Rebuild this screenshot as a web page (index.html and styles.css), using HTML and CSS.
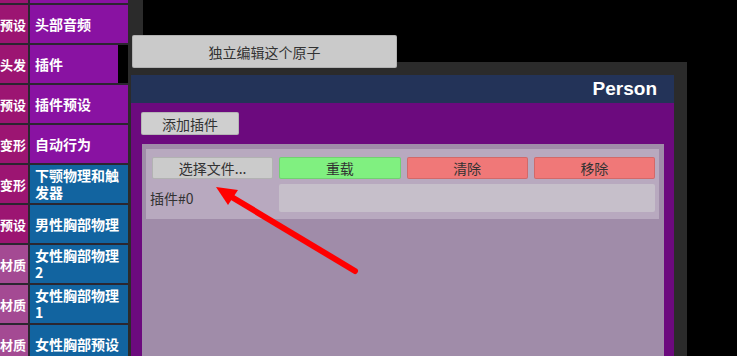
FILE: index.html
```html
<!DOCTYPE html>
<html lang="zh">
<head>
<meta charset="utf-8">
<title>Person</title>
<link rel="stylesheet" href="styles.css">
</head>
<body>
<div class="screen">
  <aside class="sidebar">
    <div class="row first"><div class="c1 mag"></div><div class="c2 purple"></div></div>
    <div class="row"><div class="c1 mag">预设</div><div class="c2 purple">头部音频</div></div>
    <div class="row"><div class="c1 mag">头发</div><div class="c2 purple narrow">插件</div></div>
    <div class="row"><div class="c1 mag">预设</div><div class="c2 purple">插件预设</div></div>
    <div class="row"><div class="c1 mag">变形</div><div class="c2 purple">自动行为</div></div>
    <div class="row"><div class="c1 mag">变形</div><div class="c2 blue">下颚物理和触发器</div></div>
    <div class="row"><div class="c1 mag">预设</div><div class="c2 blue">男性胸部物理</div></div>
    <div class="row"><div class="c1 pink">材质</div><div class="c2 blue">女性胸部物理 2</div></div>
    <div class="row"><div class="c1 pink">材质</div><div class="c2 blue">女性胸部物理 1</div></div>
    <div class="row"><div class="c1 pink">材质</div><div class="c2 blue">女性胸部预设</div></div>
  </aside>
  <main class="stage">
    <div class="topbar">
      <button class="btn atom-btn">独立编辑这个原子</button>
    </div>
    <section class="frame">
      <header class="titlebar">Person</header>
      <div class="panel-body">
        <button class="btn add-btn">添加插件</button>
        <div class="plugins">
          <div class="plugin-card">
            <button class="btn">选择文件...</button>
            <button class="btn green">重载</button>
            <button class="btn red">清除</button>
            <button class="btn red">移除</button>
            <div class="plugin-label">插件#0</div>
            <div class="plugin-field"></div>
          </div>
        </div>
      </div>
    </section>
  </main>
</div>
<svg class="arrow" width="737" height="356" viewBox="0 0 737 356" xmlns="http://www.w3.org/2000/svg">
  <line x1="355" y1="271" x2="230" y2="196" stroke="#ff0000" stroke-width="6" stroke-linecap="round"/>
  <polygon points="216,187 238,190 228,205" fill="#ff0000"/>
</svg>
</body>
</html>
```
FILE: styles.css
```css
html, body {
  margin: 0;
  padding: 0;
  width: 737px;
  height: 356px;
  overflow: hidden;
  background: #000;
}
body {
  position: relative;
  font-family: "Noto Sans CJK SC", "Noto Sans", sans-serif;
}
.screen {
  display: flex;
  height: 356px;
}

/* sidebar */
.sidebar {
  width: 128px;
  flex: none;
  background: #2b2630;
  display: flex;
  flex-direction: column;
  gap: 2px;
  overflow: hidden;
}
.row {
  display: flex;
  gap: 2px;
  height: 38px;
  flex: none;
}
.row.first {
  margin-top: -35px;
}
.c1 {
  width: 28px;
  flex: none;
  display: flex;
  justify-content: flex-end;
  align-items: center;
  white-space: nowrap;
  padding-right: 2px;
  box-sizing: border-box;
  color: #fff;
  font-weight: bold;
  font-size: 13px;
}
.c2 {
  flex: 1;
  display: flex;
  align-items: center;
  padding: 0 5px;
  color: #fff;
  font-weight: bold;
  font-size: 14px;
  line-height: 17px;
}
.mag { background: #9c1572; }
.pink { background: #a44a93; }
.purple { background: #8912a2; }
.blue { background: #1264a0; }
.narrow { border-right: 10px solid #000; }

/* stage */
.stage {
  flex: 1;
  display: flex;
  flex-direction: column;
  min-width: 0;
}
.topbar {
  height: 62px;
  flex: none;
  box-sizing: border-box;
  padding: 35px 0 0 4px;
  background: linear-gradient(to right, #2b2b2b 15px, #000 15px);
}
.btn {
  border: 1px solid rgba(0, 0, 0, 0.12);
  border-radius: 2px;
  background: #cbcbcb;
  color: #333;
  font-family: "Noto Sans CJK SC", "Noto Sans", sans-serif;
  font-size: 14px;
  padding: 0;
  margin: 0;
  box-sizing: border-box;
}
.atom-btn {
  position: relative;
  z-index: 1;
  width: 265px;
  height: 33px;
  background: #cacaca;
}
.frame {
  width: 559px;
  flex: 1;
  background: #2b2b2b;
  padding: 13px 13px 0 3px;
  box-sizing: border-box;
  display: flex;
  flex-direction: column;
}
.titlebar {
  height: 28px;
  flex: none;
  background: #233358;
  color: #fff;
  font-family: "Liberation Sans", Arial, sans-serif;
  font-weight: bold;
  font-size: 19px;
  line-height: 28px;
  text-align: right;
  padding-right: 17px;
}
.panel-body {
  flex: 1;
  background: #6c0a7e;
  padding: 9px 10px 0 10px;
  display: flex;
  flex-direction: column;
}
.add-btn {
  width: 98px;
  height: 23px;
  align-self: flex-start;
  margin-bottom: 9px;
  background: #cfcfcf;
}
.plugins {
  flex: 1;
  margin-left: 1px;
  background: #a08ca9;
  padding: 5px 5px 0 4px;
}
.plugin-card {
  background: #b8a9bf;
  padding: 8px 4px 7px 6px;
  display: grid;
  grid-template-columns: repeat(4, 1fr);
  grid-template-rows: 22px 28px;
  column-gap: 6px;
  row-gap: 5px;
}
.green { background: #80f080; }
.red { background: #f07878; }
.plugin-label {
  align-self: center;
  margin-left: -2px;
  color: #333;
  font-size: 14px;
}
.plugin-field {
  grid-column: 2 / 5;
  background: #c6bfca;
  border-radius: 2px;
}

/* annotation arrow */
.arrow {
  position: absolute;
  left: 0;
  top: 0;
  pointer-events: none;
}
```
